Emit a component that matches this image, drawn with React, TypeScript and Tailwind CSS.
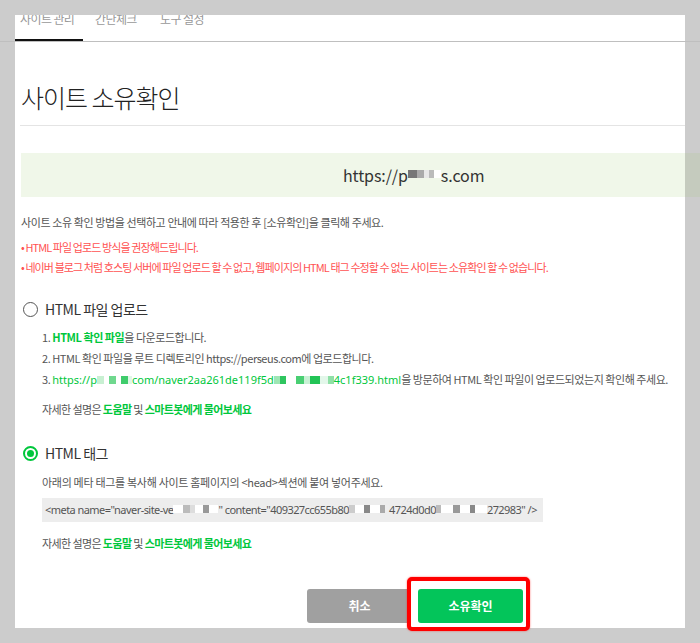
import React from "react";

const font = { fontFamily: "'Noto Sans CJK KR', 'Noto Sans', sans-serif" };
const latin = { fontFamily: "'Noto Sans', 'Noto Sans CJK KR', sans-serif" };

// pixelated blur bits left in the screenshot
function Mosaic({ cells }: { cells: [number, string][] }) {
  return (
    <span className="inline-flex items-center align-middle h-[10px] -mt-[2px]">
      {cells.map(([w, c], i) => (
        <span key={i} className="inline-block h-[8px]" style={{ width: w, background: c }} />
      ))}
    </span>
  );
}

function HelpLine() {
  return (
    <p className="text-[11px] leading-[16px] tracking-[-0.6px] text-[#555]">
      자세한 설명은 <span className="font-bold text-[#00c73c]">도움말</span> 및{" "}
      <span className="font-bold text-[#00c73c]">스마트봇에게 물어보세요</span>
    </p>
  );
}

export default function App() {
  return (
    <div className="relative w-[700px] h-[643px] overflow-hidden bg-[#cccccc] pt-[15px]" style={font}>
      {/* tabs */}
      <div className="flex h-[27px] border-b border-[#bfbfbf]">
        <div className="w-[15px] shrink-0" />
        <div className="flex flex-1 overflow-hidden bg-white pl-[5px] text-[12px] leading-[14px] tracking-[-0.6px] text-[#999]">
          <div className="relative w-[63px] -mt-[3px]">
            사이트 관리
            <span className="absolute -left-[12px] right-0 top-[27px] h-[2px] bg-[#111]" />
          </div>
          <div className="w-[77px] -mt-[3px] pl-[12px]">간단체크</div>
          <div className="-mt-[3px]">도구 설정</div>
        </div>
        <div className="w-[15px] shrink-0" />
      </div>

      {/* panel */}
      <div className="mx-[15px] h-[586px] bg-white pt-[39px]">
        <div className="ml-[5px] border-b border-[#e4e4e4] pb-[12px]">
          <h1 className="pl-[1px] text-[25px] font-light leading-[32px] tracking-[-1px] text-[#222]">
            사이트 소유확인
          </h1>
        </div>

        <div className="ml-[6px] -mr-[15px] mt-[27px] flex h-[44px]">
          <div className="flex flex-1 items-center bg-[#f0f7e9] pl-[322px] text-[16px] tracking-[-0.1px] text-[#333]">
            https://p
            <Mosaic cells={[[9, "#777"], [7, "#aaa"], [5, "#e8e8e8"], [5, "#bbb"], [7, "#fff"]]} />
            s.com
          </div>
          <div className="w-[15px] bg-[#c5cbbe]" />
        </div>

        <div className="pl-[6px]">
          <p className="mt-[17px] text-[11px] leading-[16px] tracking-[-0.4px] text-[#555]">
            사이트 소유 확인 방법을 선택하고 안내에 따라 적용한 후 [소유확인]을 클릭해 주세요.
          </p>
          <div className="mt-[7px] text-[11px] leading-[20px] tracking-[-0.9px] text-[#ff5252]">
            <p>• HTML 파일 업로드 방식을 권장해드립니다.</p>
            <p>• 네이버 블로그 처럼 호스팅 서버에 파일 업로드 할 수 없고, 웹페이지의 HTML 태그 수정할 수 없는 사이트는 소유확인 할 수 없습니다.</p>
          </div>
        </div>

        <label className="mt-[22px] flex h-[20px] items-center pl-[8px]">
          <span className="h-[15px] w-[15px] rounded-full border-[1.5px] border-[#555]" />
          <span className="ml-[7px] text-[14px] tracking-[-0.5px] text-[#333]">HTML 파일 업로드</span>
        </label>

        <ol className="mt-[8px] pl-[27px] text-[11px] leading-[21px] tracking-[-0.45px] text-[#555]">
          <li>
            1. <span className="font-bold text-[#00c73c]">HTML 확인 파일</span>을 다운로드합니다.
          </li>
          <li>2. HTML 확인 파일을 루트 디렉토리인 https://perseus.com에 업로드합니다.</li>
          <li className="whitespace-nowrap">
            3.{" "}
            <span className="tracking-[0px] text-[#00c73c]" style={latin}>
              https://p
              <Mosaic cells={[[7, "#c8f0d2"], [5, "#fff"], [7, "#6fd88e"], [5, "#fff"], [7, "#3fcc6c"], [4, "#e0f7e8"]]} />
              com/naver2aa261de119f5d
              <Mosaic cells={[[6, "#9ee6b3"], [6, "#2fc55f"], [10, "#fff"], [8, "#49cf73"], [6, "#c9f1d5"], [10, "#22c456"], [8, "#e3f7ea"], [6, "#8fe0a7"]]} />
              4c1f339.html
            </span>
            을 방문하여 HTML 확인 파일이 업로드되었는지 확인해 주세요.
          </li>
        </ol>

        <div className="mt-[11px] pl-[27px]">
          <HelpLine />
        </div>

        <label className="mt-[26px] flex h-[20px] items-center pl-[8px]">
          <span className="flex h-[15px] w-[15px] items-center justify-center rounded-full border-2 border-[#00c73c]">
            <span className="h-[7px] w-[7px] rounded-full bg-[#00c73c]" />
          </span>
          <span className="ml-[7px] text-[14px] tracking-[-0.5px] text-[#333]">HTML 태그</span>
        </label>

        <div className="pl-[27px]">
          <p className="mt-[11px] text-[11px] leading-[16px] tracking-[-0.3px] text-[#555]">
            아래의 메타 태그를 복사해 사이트 홈페이지의 &lt;head&gt;섹션에 붙여 넣어주세요.
          </p>
          <div
            className="mt-[8px] flex h-[24px] w-[501px] items-center whitespace-nowrap bg-[#ededed] pl-[3px] text-[11px] tracking-[-0.55px] text-[#555]"
            style={latin}
          >
            &lt;meta name="naver-site-ve
            <Mosaic cells={[[10, "#fff"], [7, "#bbb"], [5, "#ddd"], [8, "#fff"], [6, "#999"], [9, "#fff"]]} />
            " content="409327cc655b80
            <Mosaic cells={[[6, "#ccc"], [9, "#fff"], [6, "#888"], [10, "#fff"], [5, "#aaa"], [4, "#eee"]]} />
            4724d0d0
            <Mosaic cells={[[5, "#bbb"], [12, "#fff"], [7, "#999"], [10, "#fff"], [5, "#888"], [12, "#fff"]]} />
            272983" /&gt;
          </div>
          <div className="mt-[13px]">
            <HelpLine />
          </div>
        </div>

        <div className="mt-[38px] flex gap-[6px] pl-[292px]">
          <button className="h-[34px] w-[105px] rounded-[3px] bg-[#a0a0a0] text-[12px] font-bold text-white">
            취소
          </button>
          <div className="relative">
            <span className="absolute -left-[11px] -right-[7px] -top-[12px] -bottom-[8px] rounded-[5px] border-[4px] border-[#ff0000] bg-white shadow-[0_0_2px_rgba(255,0,0,0.6)]" />
            <button className="relative h-[34px] w-[105px] rounded-[3px] bg-[#03c55a] text-[12px] font-bold text-white">
              소유확인
            </button>
          </div>
        </div>
      </div>
    </div>
  );
}
